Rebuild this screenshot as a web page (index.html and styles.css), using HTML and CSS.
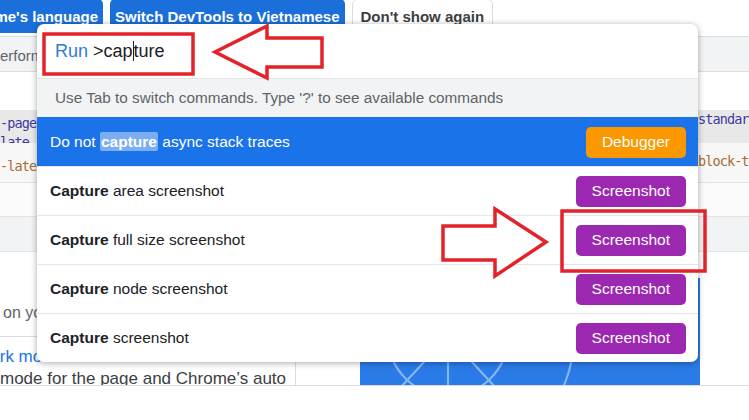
FILE: index.html
```html
<!DOCTYPE html>
<html>
<head>
<meta charset="utf-8">
<link rel="stylesheet" href="styles.css">
</head>
<body>
<div class="page">
  <div class="toolbar">
    <div class="lead"><div class="btn blue">Always match Chrome's language</div></div>
    <div class="btn blue">Switch DevTools to Vietnamese</div>
    <div class="btn plain">Don't show again</div>
  </div>
  <div class="tabbar"><span class="tab">Performance</span></div>
  <div class="spacer"></div>
  <div class="code-row r1">
    <div class="code-l attr">-page<br>late</div>
    <div class="code-r attr">standard</div>
  </div>
  <div class="code-row r2">
    <div class="code-l val">-latest</div>
    <div class="code-r val">block-text</div>
  </div>
  <div class="plain-row r3"></div>
  <div class="plain-row r4"></div>
  <div class="lower">
    <div class="left-col">
      <div class="setting s1"><div class="desc">on your device</div></div>
      <div class="setting s2">
        <div class="s-title">Dark mode</div>
        <div class="s-desc">mode for the page and Chrome’s auto</div>
      </div>
    </div>
    <div class="right-col">
      <div class="hero">
        <svg width="340" height="108" viewBox="0 0 340 108">
          <rect width="340" height="108" fill="#2a7be8"/>
          <g fill="none" stroke="#8fbcf5" stroke-width="2.2" opacity="0.9">
            <circle cx="88" cy="58" r="60"/>
            <circle cx="88" cy="58" r="126"/>
            <line x1="88" y1="58" x2="40" y2="110"/>
            <line x1="88" y1="58" x2="136" y2="110"/>
            <line x1="88" y1="58" x2="88" y2="110"/>
          </g>
        </svg>
      </div>
    </div>
  </div>
</div>

<div class="palette">
  <div class="prompt"><span class="run">Run</span><span class="query">&gt;cap<span class="caret"></span>ture</span></div>
  <div class="hint">Use Tab to switch commands. Type '?' to see available commands</div>
  <div class="item selected"><span class="label">Do not <b class="match">capture</b> async stack traces</span><span class="badge orange">Debugger</span></div>
  <div class="item"><span class="label"><b>Capture</b> area screenshot</span><span class="badge purple">Screenshot</span></div>
  <div class="item"><span class="label"><b>Capture</b> full size screenshot</span><span class="badge purple">Screenshot</span></div>
  <div class="item"><span class="label"><b>Capture</b> node screenshot</span><span class="badge purple">Screenshot</span></div>
  <div class="item"><span class="label"><b>Capture</b> screenshot</span><span class="badge purple">Screenshot</span></div>
</div>

<svg class="annot" width="749" height="420" viewBox="0 0 749 420">
  <g fill="none" stroke="#e3222a" stroke-width="3.5" stroke-linejoin="miter">
    <rect x="44" y="34" width="149" height="40"/>
    <polygon points="215,52 267,26 267,38 322,38 322,67 267,67 267,78" fill="#ffffff"/>
    <rect x="562" y="211" width="143" height="60"/>
    <polygon points="443,226 495,226 495,209 546,242 495,276 495,260 443,260" fill="#ffffff"/>
  </g>
</svg>
</body>
</html>
```

FILE: styles.css
```css
html, body {
  margin: 0;
  padding: 0;
  background: #ffffff;
}
body {
  width: 749px;
  height: 420px;
  overflow: hidden;
  position: relative;
  font-family: "Liberation Sans", Arial, sans-serif;
}
.page {
  width: 749px;
}
.toolbar {
  height: 36px;
  display: flex;
  align-items: flex-start;
  gap: 7px;
  overflow: hidden;
}
.lead {
  width: 103px;
  display: flex;
  justify-content: flex-end;
  overflow: hidden;
  flex: none;
}
.btn {
  flex: none;
  height: 34px;
  margin-top: -1px;
  box-sizing: border-box;
  padding: 0 5px;
  border-radius: 5px;
  font-size: 15px;
  font-weight: bold;
  display: flex;
  align-items: center;
  white-space: nowrap;
}
.btn.blue {
  background: #1b6fda;
  color: #ffffff;
}
.btn.plain {
  background: #ffffff;
  color: #3c4043;
  border: 1px solid #dadce0;
  padding: 0 8px;
}
.tabbar {
  height: 34px;
  background: #f1f3f4;
  border-top: 1px solid #dcdcdc;
  border-bottom: 1px solid #dcdcdc;
  display: flex;
  align-items: center;
  overflow: hidden;
}
.tab {
  margin-left: -10px;
  margin-top: 3px;
  font-size: 15px;
  color: #5f6368;
  white-space: nowrap;
}
.spacer {
  height: 38px;
}
.code-row {
  display: grid;
  grid-template-columns: 697px 1fr;
  overflow: hidden;
  font-family: "DejaVu Sans Mono", "Liberation Mono", monospace;
  font-size: 13.5px;
  letter-spacing: -0.9px;
}
.code-row.r1 {
  height: 33px;
  background: #e8e8e8;
}
.code-row.r2 {
  height: 39px;
  background: #f7f7f7;
  border-bottom: 1px solid #e2e2e2;
}
.code-l, .code-r {
  white-space: nowrap;
  overflow: hidden;
  line-height: 19px;
}
.r1 .code-l {
  padding-top: 4px;
}
.r1 .code-r {
  padding-top: 0;
}
.r2 .code-l {
  padding-top: 14px;
}
.r2 .code-r {
  padding-top: 9px;
}
.code-r {
  padding-left: 1px;
}
.attr {
  color: #3d3a9e;
}
.val {
  color: #a86a31;
}
.plain-row.r3 {
  height: 33px;
  background: #fbfbfb;
  border-bottom: 1px solid #e2e2e2;
}
.plain-row.r4 {
  height: 34px;
  background: #f2f3f4;
  border-bottom: 1px solid #e2e2e2;
}
.lower {
  display: flex;
  height: 133px;
  border-bottom: 1px solid #dadce0;
  overflow: hidden;
}
.left-col {
  width: 296px;
  flex: none;
  display: flex;
  flex-direction: column;
}
.setting.s1 {
  height: 85px;
  border-bottom: 1px solid #dadce0;
  display: flex;
  flex-direction: column;
  justify-content: flex-end;
  box-sizing: border-box;
}
.desc {
  font-size: 16px;
  line-height: 20px;
  color: #5f6368;
  padding-left: 3px;
  margin-bottom: 13px;
  white-space: nowrap;
}
.setting.s2 {
  flex: 1;
  border-right: 1px solid #dadce0;
  padding-top: 9px;
  overflow: hidden;
  white-space: nowrap;
}
.s-title {
  font-size: 17px;
  line-height: 22px;
  color: #1a73e8;
  margin-left: -22px;
}
.s-desc {
  font-size: 17px;
  line-height: 22px;
  color: #3c4043;
}
.right-col {
  flex: 1;
  padding-left: 64px;
  padding-top: 26px;
}
.hero {
  width: 340px;
  height: 108px;
}
.hero svg {
  display: block;
}

.palette {
  position: absolute;
  left: 37px;
  top: 24px;
  width: 661px;
  background: #ffffff;
  border-radius: 7px;
  box-shadow: 0 1px 6px rgba(0, 0, 0, 0.35);
  overflow: hidden;
}
.prompt {
  height: 54px;
  display: flex;
  align-items: center;
  padding-left: 18px;
  font-size: 18px;
  color: #202124;
  gap: 5px;
  white-space: nowrap;
}
.run {
  color: #2f7bd6;
}
.caret {
  display: inline-block;
  width: 1px;
  height: 20px;
  background: #202124;
  vertical-align: -4px;
}
.hint {
  height: 38px;
  border-top: 1px solid #e2e2e2;
  background: #f1f3f4;
  padding-left: 18px;
  display: flex;
  align-items: center;
  font-size: 15.3px;
  color: #5f6368;
  white-space: nowrap;
}
.item {
  height: 48px;
  border-top: 1px solid #e6e6e6;
  display: flex;
  align-items: center;
  justify-content: space-between;
  padding: 0 12px 0 13px;
  font-size: 15.5px;
  color: #202124;
  white-space: nowrap;
}
.item.selected {
  background: #1a73e8;
  color: #ffffff;
  border-top-color: #1a73e8;
}
.match {
  background: rgba(255, 255, 255, 0.42);
  padding: 1px 1px;
  border-radius: 2px;
}
.badge {
  height: 31px;
  padding: 0 16px;
  border-radius: 5px;
  color: #ffffff;
  font-size: 15.5px;
  display: flex;
  align-items: center;
}
.badge.orange {
  background: #fb9800;
}
.badge.purple {
  background: #9c27b0;
}
.annot {
  position: absolute;
  left: 0;
  top: 0;
  pointer-events: none;
}
```
